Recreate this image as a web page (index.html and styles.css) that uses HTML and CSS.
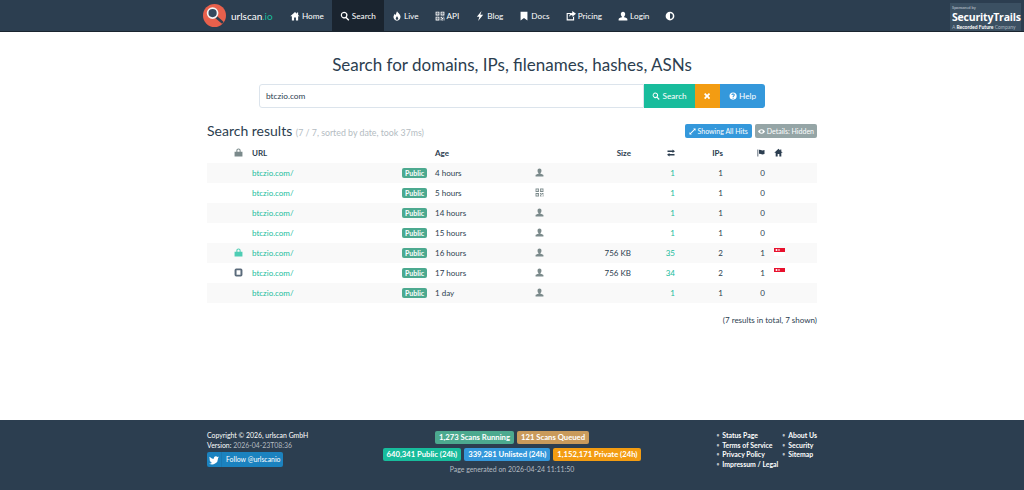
FILE: index.html
```html
<!DOCTYPE html>
<html lang="en">
<head>
    <meta charset="UTF-8">
    <title>urlscan.io</title>
    <link rel="stylesheet" href="styles.css">
</head>
<body>
    <svg class="sprites" aria-hidden="true">
        <symbol id="i-home" viewBox="0 0 16 16"><path d="M8 1.500 0.500 8.500H3V15H6.500V10.500H9.500V15H13V8.500H15.500L13 6.200V2.500H11V4.300Z"/></symbol>
        <symbol id="i-search" viewBox="0 0 16 16"><path fill-rule="evenodd" d="M6.500 1a5.500 5.500 0 0 1 4.400 8.800l4 4-1.600 1.600-4-4A5.500 5.500 0 1 1 6.500 1Zm0 2a3.500 3.500 0 1 0 0 7 3.500 3.500 0 0 0 0-7Z"/></symbol>
        <symbol id="i-fire" viewBox="0 0 16 16"><path fill-rule="evenodd" d="M8 .5c1 2.500 4.500 4 5.500 7.500.7 3.500-2 7.500-5.500 7.500S1.800 12 2.500 8.500C3 6.500 4 5.500 4.500 4.500c.5 1 .8 1.700 1.500 2C6.500 4.500 7 2.500 8 .5ZM8 8c-.5 1.500-2 2.500-2 4.200C6 13.500 7 14 8 14s2-.5 2-1.800C10 10.500 8.500 9.500 8 8Z"/></symbol>
        <symbol id="i-qr" viewBox="0 0 16 16"><path fill-rule="evenodd" d="M1 1h6v6H1Zm1.500 1.500v3h3v-3ZM9 1h6v6H9Zm1.500 1.500v3h3v-3ZM1 9h6v6H1Zm1.500 1.500v3h3v-3ZM3.500 3.500h1v1h-1Zm8 0h1v1h-1Zm-8 8h1v1h-1ZM9 9h2v2H9Zm3 0h3v1.500h-3Zm-1 2h2v2h-2Zm3 0h1v4h-1ZM9 12h1.500v3H9Zm2.500 2H13v1h-1.500Z"/></symbol>
        <symbol id="i-flash" viewBox="0 0 16 16"><path d="M10.500 0 3 9h4l-2 7 8-10H8.500Z"/></symbol>
        <symbol id="i-bookmark" viewBox="0 0 16 16"><path d="M2.500 1h11v14L8 11l-5.500 4Z"/></symbol>
        <symbol id="i-share" viewBox="0 0 16 16"><path d="M1 3h8L7.500 4.800H2.800v8.400h8.400V10L13 8.500V15H1ZM10 0l6 4.500-6 4.500V6.300C7.500 6.300 6 7.500 5 10c0-4 2-6.500 5-6.800Z"/></symbol>
        <symbol id="i-user" viewBox="0 0 16 16"><path d="M8 1c2.200 0 3.500 1.600 3.500 3.800 0 1.800-.8 3.400-1.800 4.100v1.200c2.500.7 5.300 1.400 5.300 3V15H1v-1.900c0-1.600 2.800-2.300 5.300-3V8.900C5.300 8.200 4.500 6.600 4.500 4.800 4.500 2.600 5.800 1 8 1Z"/></symbol>
        <symbol id="i-adjust" viewBox="0 0 16 16"><path fill-rule="evenodd" d="M8 1a7 7 0 1 1 0 14A7 7 0 0 1 8 1Zm0 2.500v9a4.500 4.500 0 0 0 0-9Z"/></symbol>
        <symbol id="i-remove" viewBox="0 0 16 16"><path d="M4.500 2 8 5.500 11.500 2 14 4.500 10.500 8 14 11.500 11.500 14 8 10.500 4.500 14 2 11.500 5.500 8 2 4.500Z"/></symbol>
        <symbol id="i-help" viewBox="0 0 16 16"><path fill-rule="evenodd" d="M8 1a7 7 0 1 1 0 14A7 7 0 0 1 8 1ZM7 11v2h2v-2Zm1-8C6.200 3 5 4 4.800 5.800l2 .2C7 5.200 7.400 4.800 8 4.800c.7 0 1.100.4 1.100 1 0 1.200-2.100 1.400-2.100 3.700v.5h2v-.4c0-1.300 2.200-1.700 2.200-3.900C11.200 4 9.800 3 8 3Z"/></symbol>
        <symbol id="i-fullscreen" viewBox="0 0 16 16"><path d="M9.500 1H15v5.500L13 4.500 4.500 13 6.500 15H1V9.500L3 11.500 11.500 3Z"/></symbol>
        <symbol id="i-eye" viewBox="0 0 16 16"><path fill-rule="evenodd" d="M8 3c3.500 0 6.500 2.200 8 5-1.500 2.800-4.500 5-8 5S1.500 10.800 0 8c1.500-2.800 4.500-5 8-5Zm0 2a3 3 0 1 0 0 6 3 3 0 0 0 0-6Z"/></symbol>
        <symbol id="i-lock" viewBox="0 0 16 16"><path fill-rule="evenodd" d="M8 1c2.300 0 3.800 1.500 3.800 3.800V6.500H15V15H1V6.500h3.200V4.800C4.200 2.500 5.700 1 8 1Zm0 1.800c-1.200 0-2 .8-2 2v1.700h4V4.800c0-1.200-.8-2-2-2Z"/></symbol>
        <symbol id="i-stop" viewBox="0 0 16 16"><path fill-rule="evenodd" d="M4 1h8a3 3 0 0 1 3 3v8a3 3 0 0 1-3 3H4a3 3 0 0 1-3-3V4a3 3 0 0 1 3-3Zm.5 3v8h7V4Z"/></symbol>
        <symbol id="i-transfer" viewBox="0 0 16 16"><path d="M11 1l5 3.500L11 8V6H1V3h10ZM5 8v2h10v3H5v2L0 11.500Z"/></symbol>
        <symbol id="i-flag" viewBox="0 0 16 16"><path d="M1 1h1.500v14H1ZM4 2c2-1 3.500 0 5 .5s3 .5 6-.5v8c-3 1-4.500 1-6 .5S6 9 4 10Z"/></symbol>
        <symbol id="i-twitter" viewBox="0 0 16 16"><path d="M16 3.500c-.6.3-1.200.4-1.900.5.700-.4 1.200-1 1.400-1.800-.6.400-1.300.6-2.100.8A3.300 3.300 0 0 0 7.800 6C5.100 5.900 2.700 4.600 1.100 2.600c-.9 1.500-.4 3.400 1 4.400-.5 0-1-.2-1.500-.4 0 1.600 1.100 3 2.600 3.300-.5.100-1 .1-1.500 0 .4 1.300 1.600 2.200 3.100 2.300A6.600 6.600 0 0 1 0 13.500 9.300 9.300 0 0 0 14.400 5.200c.6-.4 1.200-1 1.600-1.700Z"/></symbol>
        <symbol id="i-sg" viewBox="0 0 11 8"><rect width="11" height="4" fill="#e8112d"/><rect y="4" width="11" height="4" fill="#fff"/><circle cx="2.500" cy="2" r="1" fill="#fff"/><rect x="4" y="1.500" width="2" height="1" fill="#fff"/></symbol>
    </svg>

    <nav class="navbar">
        <div class="brand">
            <svg class="logo" viewBox="0 0 24 24">
                <circle cx="12" cy="12" r="12" fill="#e8604c"/>
                <path d="M13 13 20 19" stroke="#2c3e50" stroke-width="2.600" stroke-linecap="round"/>
                <circle cx="10" cy="9.500" r="5.200" fill="#34495e" stroke="#f4f4f4" stroke-width="1.800"/>
            </svg>
            <span class="brand-name">urlscan<span class="brand-tld">.io</span></span>
        </div>
        <ul class="nav-links">
            <li><svg class="icon"><use href="#i-home"/></svg>Home</li>
            <li class="active"><svg class="icon"><use href="#i-search"/></svg>Search</li>
            <li><svg class="icon"><use href="#i-fire"/></svg>Live</li>
            <li><svg class="icon"><use href="#i-qr"/></svg>API</li>
            <li><svg class="icon"><use href="#i-flash"/></svg>Blog</li>
            <li><svg class="icon"><use href="#i-bookmark"/></svg>Docs</li>
            <li><svg class="icon"><use href="#i-share"/></svg>Pricing</li>
            <li><svg class="icon"><use href="#i-user"/></svg>Login</li>
            <li><svg class="icon"><use href="#i-adjust"/></svg></li>
        </ul>
        <div class="sponsor">
            <span class="sponsor-top">Sponsored by</span>
            <span class="sponsor-name">SecurityTrails</span>
            <span class="sponsor-sub">A <b>Recorded Future</b> Company</span>
        </div>
    </nav>

    <main class="content">
        <h1 class="title">Search for domains, IPs, filenames, hashes, ASNs</h1>
        <div class="search-bar">
            <div class="search-input">btczio.com</div>
            <div class="search-btn btn-green"><svg class="icon"><use href="#i-search"/></svg>Search</div>
            <div class="search-btn btn-orange"><svg class="icon"><use href="#i-remove"/></svg></div>
            <div class="search-btn btn-blue"><svg class="icon"><use href="#i-help"/></svg>Help</div>
        </div>

        <div class="results-head">
            <h2 class="results-title">Search results <small>(7 / 7, sorted by date, took 37ms)</small></h2>
            <div class="results-tools">
                <span class="tool tool-blue"><svg class="icon"><use href="#i-fullscreen"/></svg>Showing All Hits</span>
                <span class="tool tool-grey"><svg class="icon"><use href="#i-eye"/></svg>Details: Hidden</span>
            </div>
        </div>

        <table class="results">
            <thead>
                <tr>
                    <th class="c-lock"><svg class="icon lock-head"><use href="#i-lock"/></svg></th>
                    <th class="c-url">URL</th>
                    <th class="c-badge"></th>
                    <th class="c-age">Age</th>
                    <th class="c-thumb"></th>
                    <th class="c-size">Size</th>
                    <th class="c-req"><svg class="icon"><use href="#i-transfer"/></svg></th>
                    <th class="c-ips">IPs</th>
                    <th class="c-flag"><svg class="icon"><use href="#i-flag"/></svg></th>
                    <th class="c-home"><svg class="icon"><use href="#i-home"/></svg></th>
                </tr>
            </thead>
            <tbody>
                <tr>
                    <td class="c-lock"></td><td class="c-url"><a>btczio.com/</a></td><td class="c-badge"><span class="public">Public</span></td>
                    <td class="c-age">4 hours</td><td class="c-thumb"><svg class="icon"><use href="#i-user"/></svg></td><td class="c-size"></td>
                    <td class="c-req"><a>1</a></td><td class="c-ips">1</td><td class="c-flag">0</td><td class="c-home"></td>
                </tr>
                <tr>
                    <td class="c-lock"></td><td class="c-url"><a>btczio.com/</a></td><td class="c-badge"><span class="public">Public</span></td>
                    <td class="c-age">5 hours</td><td class="c-thumb"><svg class="icon"><use href="#i-qr"/></svg></td><td class="c-size"></td>
                    <td class="c-req"><a>1</a></td><td class="c-ips">1</td><td class="c-flag">0</td><td class="c-home"></td>
                </tr>
                <tr>
                    <td class="c-lock"></td><td class="c-url"><a>btczio.com/</a></td><td class="c-badge"><span class="public">Public</span></td>
                    <td class="c-age">14 hours</td><td class="c-thumb"><svg class="icon"><use href="#i-user"/></svg></td><td class="c-size"></td>
                    <td class="c-req"><a>1</a></td><td class="c-ips">1</td><td class="c-flag">0</td><td class="c-home"></td>
                </tr>
                <tr>
                    <td class="c-lock"></td><td class="c-url"><a>btczio.com/</a></td><td class="c-badge"><span class="public">Public</span></td>
                    <td class="c-age">15 hours</td><td class="c-thumb"><svg class="icon"><use href="#i-user"/></svg></td><td class="c-size"></td>
                    <td class="c-req"><a>1</a></td><td class="c-ips">1</td><td class="c-flag">0</td><td class="c-home"></td>
                </tr>
                <tr>
                    <td class="c-lock"><svg class="icon lock-ok"><use href="#i-lock"/></svg></td><td class="c-url"><a>btczio.com/</a></td><td class="c-badge"><span class="public">Public</span></td>
                    <td class="c-age">16 hours</td><td class="c-thumb"><svg class="icon"><use href="#i-user"/></svg></td><td class="c-size">756 KB</td>
                    <td class="c-req"><a>35</a></td><td class="c-ips">2</td><td class="c-flag">1</td><td class="c-home"><svg class="flag-sg"><use href="#i-sg"/></svg></td>
                </tr>
                <tr>
                    <td class="c-lock"><svg class="icon lock-stop"><use href="#i-stop"/></svg></td><td class="c-url"><a>btczio.com/</a></td><td class="c-badge"><span class="public">Public</span></td>
                    <td class="c-age">17 hours</td><td class="c-thumb"><svg class="icon"><use href="#i-user"/></svg></td><td class="c-size">756 KB</td>
                    <td class="c-req"><a>34</a></td><td class="c-ips">2</td><td class="c-flag">1</td><td class="c-home"><svg class="flag-sg"><use href="#i-sg"/></svg></td>
                </tr>
                <tr>
                    <td class="c-lock"></td><td class="c-url"><a>btczio.com/</a></td><td class="c-badge"><span class="public">Public</span></td>
                    <td class="c-age">1 day</td><td class="c-thumb"><svg class="icon"><use href="#i-user"/></svg></td><td class="c-size"></td>
                    <td class="c-req"><a>1</a></td><td class="c-ips">1</td><td class="c-flag">0</td><td class="c-home"></td>
                </tr>
            </tbody>
        </table>
        <p class="total">(7 results in total, 7 shown)</p>
    </main>

    <footer class="footer">
        <div class="foot-left">
            <div>Copyright © 2026, urlscan GmbH</div>
            <div>Version: <span class="muted">2026-04-23T08:36</span></div>
            <div class="follow"><span class="follow-bird"><svg class="icon"><use href="#i-twitter"/></svg></span><span class="follow-text">Follow @urlscanio</span></div>
        </div>
        <div class="foot-mid">
            <div class="label-row">
                <span class="label l-teal">1,273 Scans Running</span>
                <span class="label l-tan">121 Scans Queued</span>
            </div>
            <div class="label-row">
                <span class="label l-green">640,341 Public (24h)</span>
                <span class="label l-blue">339,281 Unlisted (24h)</span>
                <span class="label l-orange">1,152,171 Private (24h)</span>
            </div>
            <div class="generated">Page generated on 2026-04-24 11:11:50</div>
        </div>
        <div class="foot-right">
            <ul class="foot-col">
                <li>Status Page</li>
                <li>Terms of Service</li>
                <li>Privacy Policy</li>
                <li>Impressum / Legal</li>
            </ul>
            <ul class="foot-col">
                <li>About Us</li>
                <li>Security</li>
                <li>Sitemap</li>
            </ul>
        </div>
    </footer>
</body>
</html>
```

FILE: styles.css
```css
* {
    box-sizing: border-box;
}

html, body {
    height: 100%;
}

body {
    margin: 0;
    display: flex;
    flex-direction: column;
    font-family: Lato, "Open Sans", sans-serif;
    font-size: 8px;
    color: #2c3e50;
    background: #fff;
    overflow: hidden;
}

.sprites {
    display: none;
}

.icon {
    width: 1em;
    height: 1em;
    fill: currentColor;
    vertical-align: -0.12em;
}

/* navbar */
.navbar {
    height: 32px;
    flex: none;
    display: flex;
    align-items: stretch;
    padding-left: 203px;
    padding-right: 3px;
    background: #2c3e50;
    border-bottom: 1px solid #1a242f;
    color: #fff;
    font-size: 8.2px;
}

.brand {
    display: flex;
    align-items: center;
    gap: 5px;
    width: 79px;
}

.logo {
    width: 23px;
    height: 23px;
}

.brand-name {
    font-size: 10px;
}

.brand-tld {
    color: #18bc9c;
}

.nav-links {
    display: flex;
    list-style: none;
    margin: 0;
    padding: 0;
}

.nav-links li {
    display: flex;
    align-items: center;
    gap: 2px;
    padding: 0 8px;
    white-space: nowrap;
}

.nav-links .icon {
    width: 10px;
    height: 10px;
}

.nav-links .active {
    background: #1a242f;
}

.sponsor {
    margin-left: auto;
    width: 71px;
    margin-top: 3px;
    height: 28px;
    padding: 3px 2px 0;
    display: flex;
    flex-direction: column;
    background: #3b5062;
    line-height: 1;
}

.sponsor-top {
    font-size: 4px;
    color: #c5ced6;
}

.sponsor-name {
    font-size: 10.5px;
    font-weight: 700;
    margin: 2px 0;
    font-family: "Open Sans", sans-serif;
    letter-spacing: -0.2px;
}

.sponsor-sub {
    font-size: 5px;
    white-space: nowrap;
    color: #aab6c0;
}

.sponsor-sub b {
    color: #fff;
}

/* main */
.content {
    flex: 1;
    width: 610px;
    margin: 0 auto;
}

.title {
    margin: 21px 0 0;
    font-size: 17px;
    font-weight: 400;
    line-height: 23px;
    text-align: center;
}

.search-bar {
    display: flex;
    margin: 8px 52px 0;
    height: 24px;
}

.search-input {
    flex: 1;
    display: flex;
    align-items: center;
    padding: 0 6px;
    font-size: 8.3px;
    border: 1px solid #dce4ec;
    border-radius: 3px 0 0 3px;
}

.search-btn {
    display: flex;
    align-items: center;
    justify-content: center;
    gap: 2px;
    font-size: 8.2px;
    color: #fff;
}

.btn-green {
    width: 51px;
    background: #18bc9c;
}

.btn-orange {
    width: 25px;
    background: #f39c12;
}

.btn-blue {
    width: 45px;
    background: #3498db;
    border-radius: 0 3px 3px 0;
}

.results-head {
    display: flex;
    justify-content: space-between;
    align-items: flex-start;
    margin-top: 14px;
}

.results-title {
    margin: 0;
    font-size: 14px;
    font-weight: 400;
    line-height: 17px;
}

.results-title small {
    font-size: 8.8px;
    color: #b4bcc2;
}

.results-tools {
    display: flex;
    gap: 3px;
    margin-top: 2px;
}

.tool {
    height: 14px;
    padding: 0 3px;
    display: flex;
    align-items: center;
    gap: 2px;
    font-size: 7px;
    color: #fff;
    border-radius: 2px;
}

.tool-blue {
    padding: 0 4px;
    background: #3498db;
}

.tool-grey {
    background: #95a5a6;
}

/* table */
.results {
    width: 100%;
    table-layout: fixed;
    border-collapse: collapse;
    margin-top: 2px;
}

.results th, .results td {
    height: 20px;
    padding: 0;
    text-align: left;
    white-space: nowrap;
}

.results th {
    font-weight: 700;
}

.results tbody tr:nth-child(odd) {
    background: #f9f9f9;
}

.results a {
    color: #18bc9c;
}

.results .c-lock { width: 45px; text-align: right; padding-right: 9px; }
.results .c-url { width: 150px; }
.results .c-badge { width: 25px; }
.results .c-age { width: 108px; padding-left: 8px; }
.results .c-thumb { width: 61px; color: #7b8a8b; }
.results .c-size { width: 35px; text-align: right; }
.results .c-req { width: 44px; text-align: right; }
.results .c-ips { width: 49px; text-align: right; padding-right: 1px; }
.results .c-flag { width: 41px; text-align: right; }
.results .c-home { width: auto; padding-left: 9px; }

.results .c-lock .icon, .results .c-thumb .icon, .results .c-home .icon {
    width: 9px;
    height: 9px;
}

.lock-head { color: #7b8a8b; }
.lock-ok { color: #4ecdb4; }
.lock-stop { color: #5b6b7b; }

.public {
    display: inline-block;
    width: 25px;
    height: 10px;
    line-height: 10px;
    text-align: center;
    font-size: 7px;
    font-weight: 700;
    color: #fff;
    background: #4ca98f;
    border-radius: 2px;
}

.flag-sg {
    display: block;
    width: 11px;
    height: 8px;
    margin-top: -2px;
}

.total {
    margin: 12px 0 0;
    text-align: right;
}

/* footer */
.footer {
    flex: none;
    height: 70px;
    padding: 11px 207px 0;
    display: grid;
    grid-template-columns: 1fr auto 1fr;
    background: #2c3e50;
    color: #fff;
    font-size: 6.9px;
}

.foot-left {
    line-height: 9.5px;
}

.muted {
    color: #b4bcc2;
}

.follow {
    display: inline-flex;
    margin-top: 2px;
    width: 76px;
    height: 15px;
    align-items: center;
    white-space: nowrap;
    background: #1b82bf;
    border-radius: 2px;
}

.follow-bird {
    width: 15px;
    height: 100%;
    display: flex;
    align-items: center;
    justify-content: center;
    font-size: 10px;
    border-right: 1px solid #1a78b2;
}

.follow-text {
    padding-left: 4px;
}

.foot-mid {
    display: flex;
    flex-direction: column;
    align-items: center;
    gap: 4px;
}

.label-row {
    display: flex;
    gap: 3px;
    justify-content: center;
}

.label {
    height: 13px;
    line-height: 13px;
    padding: 0 4px;
    font-size: 7.7px;
    font-weight: 700;
    border-radius: 2px;
    white-space: nowrap;
}

.l-teal { background: #4ca98f; }
.l-tan { background: #c99a5b; }
.l-green { background: #18bc9c; }
.l-blue { background: #3498db; }
.l-orange { background: #f39c12; }

.generated {
    color: #b4bcc2;
}

.foot-right {
    display: flex;
    justify-content: flex-end;
    gap: 4px;
}

.foot-col {
    list-style: none;
    margin: 0;
    padding: 0;
    font-weight: 700;
    line-height: 9.7px;
    white-space: nowrap;
}

.foot-col li::before {
    content: "•";
    font-size: 5px;
    margin-right: 3px;
    vertical-align: 1px;
    color: #b4bcc2;
}
```
